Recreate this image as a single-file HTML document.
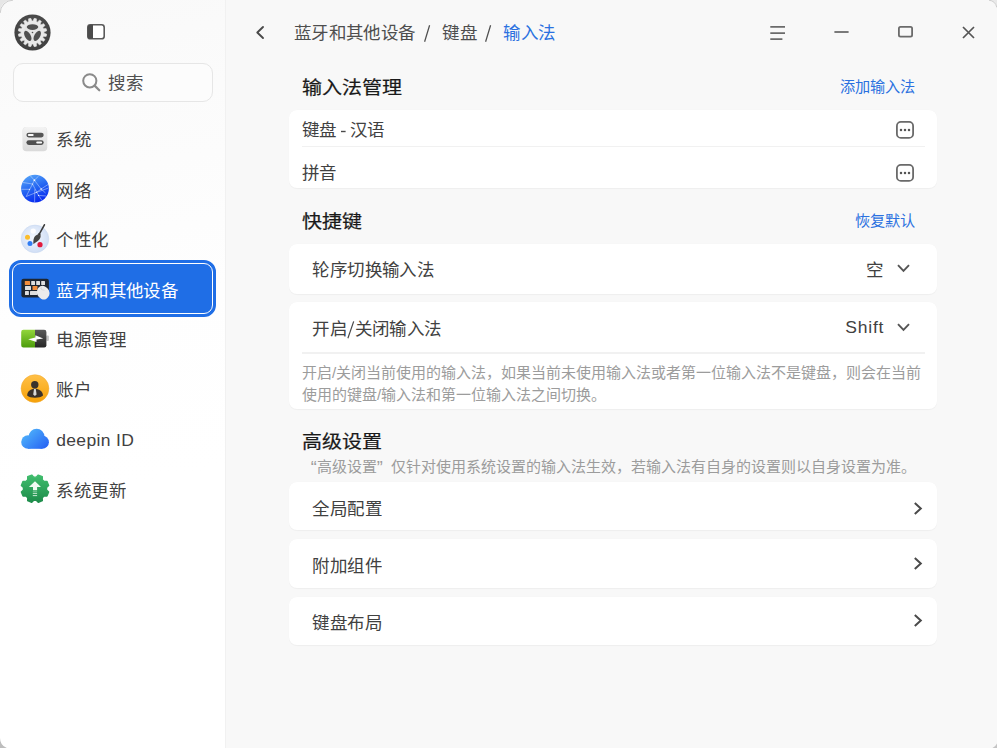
<!DOCTYPE html>
<html lang="zh-CN">
<head>
<meta charset="utf-8">
<style>
*{box-sizing:border-box;margin:0;padding:0}
html,body{width:997px;height:748px;overflow:hidden;background:#f8f8f8;font-family:"Liberation Sans",sans-serif;color:#414141}
.a{position:absolute;white-space:nowrap;line-height:20px}
#side{position:absolute;left:0;top:0;width:225px;height:748px;background:linear-gradient(170deg,#f9f9f9 0px,#fbfbfb 120px,#fefefe 320px,#ffffff 500px)}
#sline{position:absolute;left:225px;top:0;width:1px;height:748px;background:#f1f1f1}
.search{position:absolute;left:12.5px;top:62.5px;width:200px;height:39px;border:1px solid #e6e6e6;border-radius:10px;background:#fcfcfc}
.t17{transform:scaleY(0.955);transform-origin:0 10px;font-size:17.5px;letter-spacing:0.45px;color:#414141}
.h{transform:scaleY(0.91);transform-origin:0 10px;font-size:20px;font-weight:400;color:#1a1a1a;-webkit-text-stroke:0.25px #1a1a1a}
.link{font-size:15.2px;color:#2b71e0}
.card{position:absolute;left:289px;width:648px;background:#fff;border-radius:8px;box-shadow:0 0.5px 1px rgba(0,0,0,0.04)}
.desc{font-size:15px;color:#9c9c9c}
.div{position:absolute;height:1.6px;background:#f1f1f1}
.sel{position:absolute;left:9px;top:260px;width:207px;height:57px;border-radius:12px;background:#1f6ee6;border:3px solid #1f6ee6}
.sel .in{position:absolute;left:0;top:0;right:0;bottom:0;border:1px solid #fff;border-radius:9px}
svg{position:absolute;overflow:visible}
</style>
</head>
<body>
<div id="side"></div>
<div id="sline"></div>

<!-- logo -->
<svg style="left:14px;top:14px" width="37" height="37" viewBox="0 0 36 36">
  <defs>
    <radialGradient id="lg" cx="50%" cy="40%" r="60%"><stop offset="0" stop-color="#5a5a5a"/><stop offset="1" stop-color="#3f3f3f"/></radialGradient>
  </defs>
  <circle cx="18" cy="18" r="17.6" fill="url(#lg)"/>
  <path fill="#e9e9e9" stroke="#e9e9e9" stroke-width="0.7" stroke-linejoin="round" d="M18.61 6.92 L19.62 4.30 L21.75 4.72 L21.68 7.53 L22.80 7.99 L24.74 5.96 L26.54 7.16 L25.41 9.73 L26.27 10.59 L28.84 9.46 L30.04 11.26 L28.01 13.20 L28.47 14.32 L31.28 14.25 L31.70 16.38 L29.08 17.39 L29.08 18.61 L31.70 19.62 L31.28 21.75 L28.47 21.68 L28.01 22.80 L30.04 24.74 L28.84 26.54 L26.27 25.41 L25.41 26.27 L26.54 28.84 L24.74 30.04 L22.80 28.01 L21.68 28.47 L21.75 31.28 L19.62 31.70 L18.61 29.08 L17.39 29.08 L16.38 31.70 L14.25 31.28 L14.32 28.47 L13.20 28.01 L11.26 30.04 L9.46 28.84 L10.59 26.27 L9.73 25.41 L7.16 26.54 L5.96 24.74 L7.99 22.80 L7.53 21.68 L4.72 21.75 L4.30 19.62 L6.92 18.61 L6.92 17.39 L4.30 16.38 L4.72 14.25 L7.53 14.32 L7.99 13.20 L5.96 11.26 L7.16 9.46 L9.73 10.59 L10.59 9.73 L9.46 7.16 L11.26 5.96 L13.20 7.99 L14.32 7.53 L14.25 4.72 L16.38 4.30 L17.39 6.92 Z"/>
  <circle cx="18" cy="18" r="8.9" fill="#e4e4e4"/>
  <ellipse cx="18" cy="12.7" rx="5.6" ry="2.8" fill="#505050"/>
  <ellipse cx="13.4" cy="21.3" rx="5.4" ry="2.8" transform="rotate(60 13.4 21.3)" fill="#505050"/>
  <ellipse cx="22.6" cy="21.3" rx="5.4" ry="2.8" transform="rotate(-60 22.6 21.3)" fill="#505050"/>
  <circle cx="18" cy="18" r="0.8" fill="#505050"/>
</svg>

<!-- sidebar toggle -->
<svg style="left:87px;top:24px" width="18" height="16" viewBox="0 0 18 16">
  <rect x="0.8" y="0.8" width="16.4" height="14" rx="2.6" fill="#fff" stroke="#5a5a5a" stroke-width="1.6"/>
  <path d="M3.4 0.8 H6 V14.8 H3.4 A2.6 2.6 0 0 1 0.8 12.2 V3.4 A2.6 2.6 0 0 1 3.4 0.8 Z" fill="#4b4b4b"/>
</svg>

<div class="search"></div>
<svg style="left:82px;top:73px" width="20" height="20" viewBox="0 0 20 20">
  <circle cx="7.8" cy="7.8" r="6.6" fill="none" stroke="#8a8a8a" stroke-width="2"/>
  <path d="M12.6 12.6 L17.3 17.3" stroke="#8a8a8a" stroke-width="2.2" stroke-linecap="round"/>
</svg>
<div class="a t17" style="left:108.2px;top:73px;color:#505050">搜索</div>

<!-- sidebar items -->
<div class="a t17" style="left:56.2px;top:130.4px">系统</div>
<div class="a t17" style="left:56.2px;top:180.9px">网络</div>
<div class="a t17" style="left:56.2px;top:230.4px">个性化</div>
<div class="sel"><div class="in"></div></div>
<div class="a t17" style="left:56.2px;top:280.9px;color:#fff">蓝牙和其他设备</div>
<div class="a t17" style="left:56.2px;top:330.4px">电源管理</div>
<div class="a t17" style="left:56.2px;top:380.4px">账户</div>
<div class="a t17" style="left:56.2px;top:430.4px;letter-spacing:0.35px">deepin ID</div>
<div class="a t17" style="left:56.2px;top:480.9px">系统更新</div>


<!-- sidebar icons -->
<svg style="left:18px;top:122px" width="34" height="34" viewBox="0 0 34 34">
  <defs><linearGradient id="sysg" x1="0" y1="0" x2="0" y2="1"><stop offset="0" stop-color="#f3f3f3"/><stop offset="1" stop-color="#dadada"/></linearGradient></defs>
  <rect x="4.6" y="4.9" width="24.6" height="24.4" rx="3.8" fill="#cfcfcf" opacity="0.7"/>
  <rect x="5" y="5" width="23.8" height="23.8" rx="3.5" fill="url(#sysg)"/>
  <rect x="8.4" y="10.7" width="17.3" height="4.8" rx="2.4" fill="#555"/>
  <rect x="9.8" y="12" width="5.9" height="2.1" rx="1" fill="#fafafa"/>
  <rect x="8.4" y="18.2" width="17.3" height="4.8" rx="2.4" fill="#505050"/>
  <rect x="18.2" y="19.5" width="5.9" height="2.1" rx="1" fill="#fafafa"/>
</svg>
<svg style="left:18px;top:172px" width="34" height="34" viewBox="0 0 34 34">
  <defs><linearGradient id="netg" x1="0.2" y1="0" x2="0.6" y2="1"><stop offset="0" stop-color="#56a6f9"/><stop offset="0.5" stop-color="#2566f2"/><stop offset="1" stop-color="#0628ef"/></linearGradient></defs>
  <circle cx="17" cy="16.6" r="13.9" fill="url(#netg)"/>
  <g stroke="#dfeaff" stroke-width="0.55" fill="none" opacity="0.85">
    <path d="M16.4 8.2 L8.2 24.5 M16.4 8.2 L23.2 17 L27.5 21 M16.4 8.2 L12.5 4 M16.4 8.2 L20.5 4.2 M14.5 12 L20.5 23.4 L24 28.5 M11.4 17.3 L3.5 17.3 M8.2 24.5 L18.2 20.5 L30.5 16 M23.2 17 L18.2 20.5 M16.8 17.3 L16.6 30.4 M23.2 17 L30 12.5 M5 10.5 L14.5 12 M20.5 23.4 L28 24"/>
  </g>
  <g fill="#fff" opacity="0.9"><circle cx="16.4" cy="8.2" r="0.9"/><circle cx="23.2" cy="17" r="0.8"/><circle cx="14.5" cy="12" r="0.6"/><circle cx="11.4" cy="17.3" r="0.6"/><circle cx="18.2" cy="20.5" r="0.6"/><circle cx="20.5" cy="23.4" r="0.6"/></g>
</svg>
<svg style="left:18px;top:222px" width="34" height="34" viewBox="0 0 34 34">
  <defs><radialGradient id="palg" cx="45%" cy="45%" r="60%"><stop offset="0" stop-color="#f4f8ff"/><stop offset="1" stop-color="#cddcf4"/></radialGradient></defs>
  <circle cx="17" cy="16.9" r="13.8" fill="url(#palg)" stroke="#c9d8f0" stroke-width="0.6"/>
  <circle cx="15.2" cy="9.1" r="2.7" fill="#fdfdff"/>
  <circle cx="9.5" cy="15.2" r="2.5" fill="#fbbd2c"/>
  <circle cx="12" cy="21.6" r="2.5" fill="#2f7cf3"/>
  <circle cx="22" cy="22.7" r="2.6" fill="#e11a3d"/>
  <path d="M26.4 2.8 L21.4 11.8" stroke="#3c3c3c" stroke-width="1.6" stroke-linecap="round"/>
  <path d="M20.3 11.3 L22.8 12.6 L22.2 13.8 L19.7 12.5 Z" fill="#333"/>
  <path d="M19.6 12.4 C15.6 13.8 15.2 17.8 15.3 21.9 C18.8 20 22.8 17.5 22.7 13.5 Z" fill="#444"/>
</svg>
<svg style="left:18px;top:272px" width="34" height="34" viewBox="0 0 34 34">
  <rect x="3.4" y="6.8" width="27.5" height="18.7" rx="2.2" fill="#1d2530"/>
  <g fill="#dedede">
    <rect x="13.2" y="8.9" width="3.8" height="4.1" rx="0.5"/><rect x="18.2" y="8.9" width="3.8" height="4.1" rx="0.5"/><rect x="23.2" y="8.9" width="3.8" height="4.1" rx="0.5"/>
    <rect x="7" y="14.1" width="6" height="3.9" rx="0.5"/>
    <rect x="7" y="19.1" width="3.9" height="3.9" rx="0.5"/><rect x="12" y="19.1" width="7.5" height="3.9" rx="0.5"/>
  </g>
  <rect x="6.8" y="8.9" width="5.2" height="4.1" rx="0.5" fill="#f28d3c"/>
  <rect x="14.5" y="14.1" width="5" height="3.9" rx="0.5" fill="#f28d3c"/>
  <ellipse cx="25.2" cy="20.7" rx="6.1" ry="7" transform="rotate(-25 25.2 20.7)" fill="#ececec"/>
  <path d="M21.8 15.5 Q23 18.5 26.5 18.2 M23.8 17.6 L23.2 14.5" stroke="#c8c8c8" stroke-width="0.5" fill="none"/>
</svg>
<svg style="left:18px;top:322px" width="34" height="34" viewBox="0 0 34 34">
  <defs>
    <linearGradient id="bg1" x1="0" y1="0" x2="0" y2="1"><stop offset="0" stop-color="#93d63c"/><stop offset="1" stop-color="#4c9c0b"/></linearGradient>
    <linearGradient id="bg2" x1="0" y1="0" x2="0" y2="1"><stop offset="0" stop-color="#5a5a5a"/><stop offset="1" stop-color="#262626"/></linearGradient>
  </defs>
  <rect x="28.2" y="13.6" width="2.7" height="5.4" rx="1" fill="#c4c4c4"/>
  <path d="M5.4 7.7 H17 V25.5 H5.4 A2.2 2.2 0 0 1 3.2 23.3 V9.9 A2.2 2.2 0 0 1 5.4 7.7 Z" fill="url(#bg1)"/>
  <path d="M17 7.7 H26.2 A2.2 2.2 0 0 1 28.4 9.9 V23.3 A2.2 2.2 0 0 1 26.2 25.5 H17 Z" fill="url(#bg2)"/>
  <path d="M10.2 17.3 L17.3 15.4 L17.4 13.2 L25.2 16.4 L18.6 17.6 L18.4 20 Z" fill="#fff"/>
</svg>
<svg style="left:18px;top:372px" width="34" height="34" viewBox="0 0 34 34">
  <defs><linearGradient id="accg" x1="0" y1="0" x2="0" y2="1"><stop offset="0" stop-color="#ffc047"/><stop offset="1" stop-color="#f6a108"/></linearGradient>
  <clipPath id="accc"><circle cx="17" cy="16.6" r="13.2"/></clipPath></defs>
  <circle cx="17" cy="16.6" r="13.9" fill="url(#accg)" stroke="#f0a830" stroke-width="0.5"/>
  <circle cx="16.8" cy="12.7" r="3.7" fill="#3a322c"/>
  <path d="M9.1 23.5 C9.5 19 13 16.8 16.9 16.8 C20.8 16.8 24.6 19 25 23.5 C22 26.5 12 26.5 9.1 23.5 Z" fill="#3a322c"/>
  <path d="M16 16.9 H17.8 L18.6 22.6 L16.9 24 L15.2 22.6 Z" fill="#d8d8d8"/>
</svg>
<svg style="left:18px;top:422px" width="34" height="34" viewBox="0 0 34 34">
  <defs><linearGradient id="clg" gradientUnits="userSpaceOnUse" x1="8" y1="7" x2="26" y2="27"><stop offset="0" stop-color="#50b6fb"/><stop offset="1" stop-color="#2866f4"/></linearGradient></defs>
  <g fill="url(#clg)"><circle cx="10" cy="20" r="6.8"/><circle cx="24.3" cy="20.2" r="6.6"/><circle cx="18.6" cy="14.6" r="7.8"/><rect x="10" y="16" width="14.3" height="10.8"/></g>
</svg>
<svg style="left:18px;top:472px" width="34" height="34" viewBox="0 0 34 34">
  <defs><linearGradient id="upg" x1="0" y1="0" x2="0" y2="1"><stop offset="0" stop-color="#40bd6d"/><stop offset="1" stop-color="#1e8c4b"/></linearGradient></defs>
  <path d="M18.27 5.17 L20.27 3.09 L24.31 4.76 L24.25 7.65 L26.05 9.45 L28.94 9.39 L30.61 13.43 L28.53 15.43 L28.53 17.97 L30.61 19.97 L28.94 24.01 L26.05 23.95 L24.25 25.75 L24.31 28.64 L20.27 30.31 L18.27 28.23 L15.73 28.23 L13.73 30.31 L9.69 28.64 L9.75 25.75 L7.95 23.95 L5.06 24.01 L3.39 19.97 L5.47 17.97 L5.47 15.43 L3.39 13.43 L5.06 9.39 L7.95 9.45 L9.75 7.65 L9.69 4.76 L13.73 3.09 L15.73 5.17 Z" fill="url(#upg)" stroke="url(#upg)" stroke-width="1.4" stroke-linejoin="round"/>
  <path d="M10.9 15 L17 9.3 L23 15 L19.1 15 L19.1 18.2 L15 18.2 L15 15 Z" fill="#f0fbf1"/>
  <rect x="14.8" y="19.3" width="4.3" height="0.9" fill="#f0fbf1" opacity="0.45"/>
  <rect x="14.8" y="20.9" width="4.3" height="0.9" fill="#f0fbf1" opacity="0.85"/>
  <rect x="14.8" y="23.2" width="4.3" height="0.9" fill="#f0fbf1" opacity="0.9"/>
</svg>

<!-- header -->
<svg style="left:255px;top:26px" width="10" height="13" viewBox="0 0 10 13">
  <path d="M8 1 L2.3 6.5 L8 12" fill="none" stroke="#4a4a4a" stroke-width="1.9" stroke-linecap="round" stroke-linejoin="round"/>
</svg>
<div class="a t17" style="left:293.7px;top:23.4px;color:#4e4e4e">蓝牙和其他设备</div>
<svg style="left:0;top:0" width="1" height="1"><path d="M429.6 25.3 L424.6 41.7 M490.6 25.3 L485.6 41.7" stroke="#505050" stroke-width="1.25"/></svg>
<div class="a t17" style="left:442.2px;top:23.4px;color:#4e4e4e">键盘</div>

<div class="a t17" style="left:503.2px;top:23.4px;color:#2b71e0">输入法</div>

<!-- window buttons -->
<svg style="left:769px;top:25px" width="18" height="16" viewBox="0 0 18 16">
  <path d="M1.3 1.8 H16 M1.3 8.1 H16 M1.3 14.2 H13.4" stroke="#6b6b6b" stroke-width="1.8"/>
</svg>
<svg style="left:834px;top:31px" width="15" height="2" viewBox="0 0 15 2">
  <path d="M0.4 1 H14.6" stroke="#6b6b6b" stroke-width="1.8"/>
</svg>
<svg style="left:898px;top:26px" width="15" height="12" viewBox="0 0 15 12">
  <rect x="0.9" y="0.9" width="13.2" height="9.8" rx="1.6" fill="none" stroke="#6b6b6b" stroke-width="1.8"/>
</svg>
<svg style="left:962px;top:26px" width="13" height="13" viewBox="0 0 13 13">
  <path d="M1 1 L12 12 M12 1 L1 12" stroke="#555" stroke-width="1.7"/>
</svg>

<!-- section 1 -->
<div class="a h" style="left:302px;top:77.8px">输入法管理</div>
<div class="a link" style="left:839.5px;top:77px">添加输入法</div>
<div class="card" style="top:110px;height:78px"></div>
<div class="a t17" style="left:302px;top:120.4px">键盘</div><svg style="left:0;top:0" width="1" height="1"><rect x="341" y="130.8" width="4.6" height="1.4" fill="#4a4a4a"/></svg><div class="a t17" style="left:350px;top:120.4px">汉语</div>
<div class="div" style="left:302px;top:145.6px;width:623px"></div>
<div class="a t17" style="left:302px;top:162.9px">拼音</div>
<svg style="left:896px;top:121px" width="18" height="18" viewBox="0 0 18 18">
  <rect x="0.9" y="0.9" width="16.2" height="16" rx="4" fill="none" stroke="#6a6a6a" stroke-width="1.8"/>
  <circle cx="5" cy="9" r="1.25" fill="#555"/><circle cx="9" cy="9" r="1.25" fill="#555"/><circle cx="13" cy="9" r="1.25" fill="#555"/>
</svg>
<svg style="left:896px;top:163.5px" width="18" height="18" viewBox="0 0 18 18">
  <rect x="0.9" y="0.9" width="16.2" height="16" rx="4" fill="none" stroke="#6a6a6a" stroke-width="1.8"/>
  <circle cx="5" cy="9" r="1.25" fill="#555"/><circle cx="9" cy="9" r="1.25" fill="#555"/><circle cx="13" cy="9" r="1.25" fill="#555"/>
</svg>

<!-- section 2 -->
<div class="a h" style="left:302px;top:211.8px">快捷键</div>
<div class="a link" style="left:855px;top:211px">恢复默认</div>
<div class="card" style="top:244px;height:50px"></div>
<div class="a t17" style="left:312.2px;top:260.4px">轮序切换输入法</div>
<div class="a t17" style="left:866.2px;top:260.4px">空</div>
<svg style="left:897px;top:264px" width="13" height="9" viewBox="0 0 13 9">
  <path d="M1 1.2 L6.5 6.8 L12 1.2" fill="none" stroke="#555" stroke-width="1.9"/>
</svg>

<div class="card" style="top:301.5px;height:107px"></div>
<div class="a t17" style="left:312.2px;top:319.4px">开启</div><svg style="left:0;top:0" width="1" height="1"><path d="M353.7 321.4 L347.9 338.3" stroke="#484848" stroke-width="1.2"/></svg><div class="a t17" style="left:354.5px;top:319.4px">关闭输入法</div>
<div class="a t17" style="left:845.2px;top:317.4px;letter-spacing:0.8px">Shift</div>
<svg style="left:897px;top:322.5px" width="13" height="9" viewBox="0 0 13 9">
  <path d="M1 1.2 L6.5 6.8 L12 1.2" fill="none" stroke="#555" stroke-width="1.9"/>
</svg>
<div class="div" style="left:302px;top:352.2px;width:623px"></div>
<div class="a desc" style="left:302px;top:362.5px">开启/关闭当前使用的输入法，如果当前未使用输入法或者第一位输入法不是键盘，则会在当前</div>
<div class="a desc" style="left:302px;top:384.5px">使用的键盘/输入法和第一位输入法之间切换。</div>

<!-- section 3 -->
<div class="a h" style="left:302px;top:431.8px">高级设置</div>
<div class="a desc" style="left:302px;top:457px"><span style="display:inline-block;width:14.8px;text-align:right;font-size:18px;vertical-align:top;line-height:22px">“</span>高级设置<span style="display:inline-block;width:14px;text-align:left;font-size:18px;vertical-align:top;line-height:22px">”</span>仅针对使用系统设置的输入法生效，若输入法有自身的设置则以自身设置为准。</div>

<div class="card" style="top:481.5px;height:48px"></div>
<div class="a t17" style="left:312.2px;top:499.4px">全局配置</div>
<svg style="left:913px;top:502px" width="10" height="14" viewBox="0 0 10 14">
  <path d="M1.8 1 L7.8 6.5 L1.8 12" fill="none" stroke="#4a4a4a" stroke-width="2"/>
</svg>
<div class="card" style="top:539px;height:48.5px"></div>
<div class="a t17" style="left:312.2px;top:556.4px">附加组件</div>
<svg style="left:913px;top:557px" width="10" height="14" viewBox="0 0 10 14">
  <path d="M1.8 1 L7.8 6.5 L1.8 12" fill="none" stroke="#4a4a4a" stroke-width="2"/>
</svg>
<div class="card" style="top:596.5px;height:48.3px"></div>
<div class="a t17" style="left:312.2px;top:612.9px">键盘布局</div>
<svg style="left:913px;top:614px" width="10" height="14" viewBox="0 0 10 14">
  <path d="M1.8 1 L7.8 6.5 L1.8 12" fill="none" stroke="#4a4a4a" stroke-width="2"/>
</svg>

<!-- window corners -->
<svg style="left:0;top:0" width="16" height="16" viewBox="0 0 16 16"><path d="M0 0 H12 A12 12 0 0 0 0 12 Z" fill="#e6e6e6"/><path d="M13 0.2 A12.8 12.8 0 0 0 0.2 13" fill="none" stroke="#cfcfcf" stroke-width="1"/></svg>
<svg style="left:981px;top:0" width="16" height="16" viewBox="0 0 16 16"><path d="M16 0 H8.5 A8.5 8.5 0 0 1 16 7 Z" fill="#e9e9e9"/><path d="M8 0.2 A9 9 0 0 1 15.8 7.4" fill="none" stroke="#cdcdcd" stroke-width="1"/></svg>
<svg style="left:0;top:732px" width="16" height="16" viewBox="0 0 16 16"><path d="M0 6 A10.75 10.75 0 0 0 6.8 16 H0 Z" fill="#bdbdbd"/></svg>
<svg style="left:987px;top:738px" width="10" height="10" viewBox="0 0 10 10"><path d="M10 5.5 A9 9 0 0 1 5.5 10 H10 Z" fill="#c4c4c4"/></svg>
</body>
</html>
